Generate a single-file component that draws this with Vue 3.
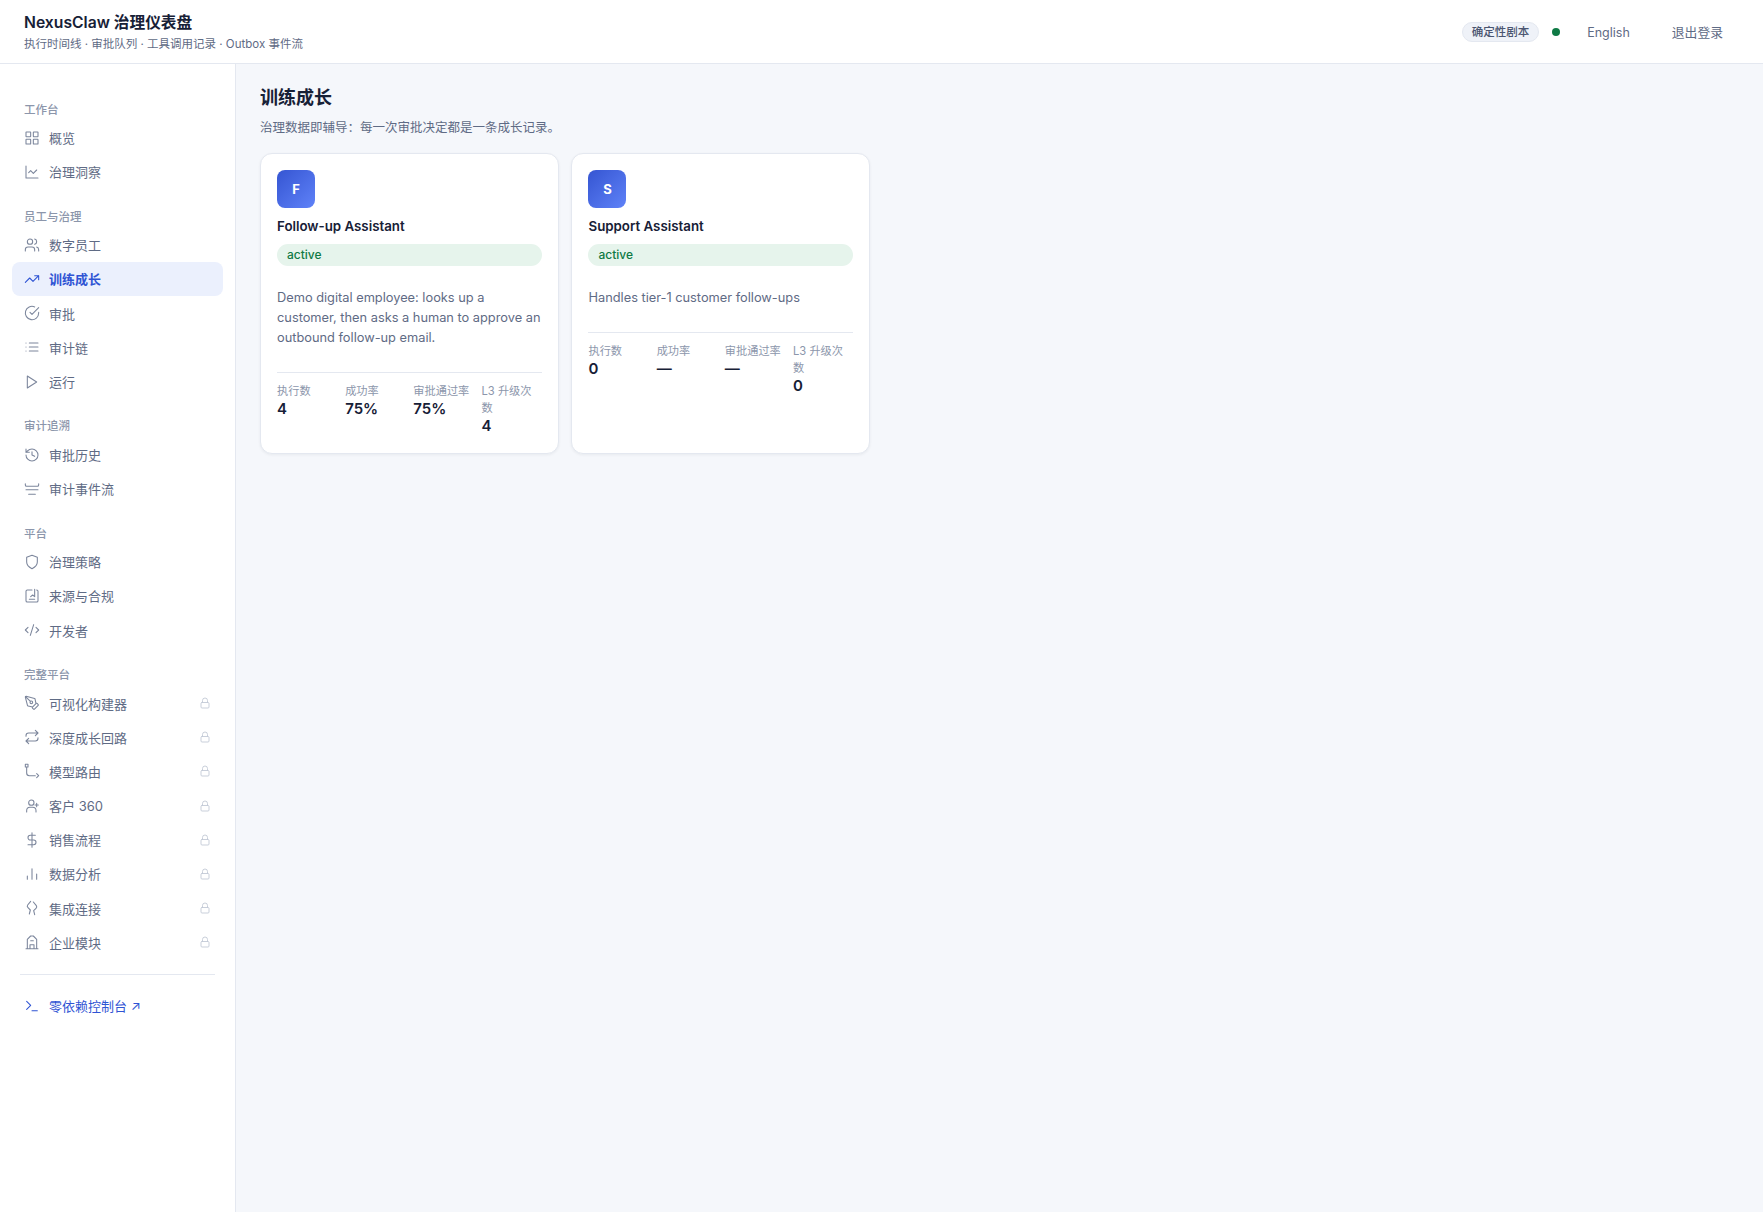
<template>
  <div class="page">
    <header class="topbar">
      <div class="brand">
        <div class="brand-title">NexusClaw 治理仪表盘</div>
        <div class="brand-sub">执行时间线 · 审批队列 · 工具调用记录 · Outbox 事件流</div>
      </div>
      <div class="top-actions">
        <span class="mode-pill">确定性剧本</span>
        <span class="status-dot"></span>
        <a class="top-link lang">English</a>
        <a class="top-link">退出登录</a>
      </div>
    </header>

    <div class="body">
      <aside class="sidebar">
        <section v-for="group in groups" :key="group.title" class="nav-group">
          <div class="nav-title">{{ group.title }}</div>
          <a
            v-for="item in group.items"
            :key="item.label"
            class="nav-item"
            :class="{ active: item.active }"
          >
            <svg class="nav-icon" viewBox="0 0 24 24" fill="none" stroke="currentColor" stroke-width="1.6" stroke-linecap="round" stroke-linejoin="round">
              <path :d="item.icon" />
            </svg>
            <span class="nav-label">{{ item.label }}</span>
            <svg v-if="group.locked" class="lock" viewBox="0 0 24 24" fill="none" stroke="currentColor" stroke-width="1.8" stroke-linecap="round" stroke-linejoin="round">
              <path d="M6 11h12a2 2 0 0 1 2 2v7a2 2 0 0 1-2 2H6a2 2 0 0 1-2-2v-7a2 2 0 0 1 2-2zM7 11V7a5 5 0 0 1 10 0v4" />
            </svg>
          </a>
        </section>
        <div class="side-divider"></div>
        <a class="nav-item console">
          <svg class="nav-icon" viewBox="0 0 24 24" fill="none" stroke="currentColor" stroke-width="1.6" stroke-linecap="round" stroke-linejoin="round">
            <path d="M4 17l6-6-6-6M12 19h8" />
          </svg>
          <span class="nav-label">零依赖控制台 ↗</span>
        </a>
      </aside>

      <main class="content">
        <h1>训练成长</h1>
        <p class="lead">治理数据即辅导&#xFF1A;每一次审批决定都是一条成长记录。</p>
        <div class="cards">
          <article v-for="emp in employees" :key="emp.name" class="card">
            <div class="avatar">{{ emp.name[0] }}</div>
            <div class="emp-name">{{ emp.name }}</div>
            <div class="badge">active</div>
            <p class="desc">{{ emp.desc }}</p>
            <div class="stats">
              <div v-for="stat in emp.stats" :key="stat.label" class="stat">
                <div class="stat-label">{{ stat.label }}</div>
                <div class="stat-value">{{ stat.value }}</div>
              </div>
            </div>
          </article>
        </div>
      </main>
    </div>
  </div>
</template>

<script setup>
const groups = [
  {
    title: '工作台',
    items: [
      { label: '概览', icon: 'M3.5 3h6a.5.5 0 0 1 .5.5v6a.5.5 0 0 1-.5.5h-6a.5.5 0 0 1-.5-.5v-6a.5.5 0 0 1 .5-.5zM14.5 3h6a.5.5 0 0 1 .5.5v6a.5.5 0 0 1-.5.5h-6a.5.5 0 0 1-.5-.5v-6a.5.5 0 0 1 .5-.5zM3.5 14h6a.5.5 0 0 1 .5.5v6a.5.5 0 0 1-.5.5h-6a.5.5 0 0 1-.5-.5v-6a.5.5 0 0 1 .5-.5zM14.5 14h6a.5.5 0 0 1 .5.5v6a.5.5 0 0 1-.5.5h-6a.5.5 0 0 1-.5-.5v-6a.5.5 0 0 1 .5-.5z' },
      { label: '治理洞察', icon: 'M3 3v18h18M19 9l-5 5-4-4-3 3' },
    ],
  },
  {
    title: '员工与治理',
    items: [
      { label: '数字员工', icon: 'M16 21v-2a4 4 0 0 0-4-4H6a4 4 0 0 0-4 4v2M13 7a4 4 0 1 1-8 0 4 4 0 0 1 8 0zM22 21v-2a4 4 0 0 0-3-3.87M16 3.13a4 4 0 0 1 0 7.75' },
      { label: '训练成长', active: true, icon: 'M22 7l-8.5 8.5-5-5L2 17M16 7h6v6' },
      { label: '审批', icon: 'M22 11.08V12a10 10 0 1 1-5.93-9.14M22 4L12 14.01l-3-3' },
      { label: '审计链', icon: 'M8 6h13M8 12h13M8 18h13M3 6h.01M3 12h.01M3 18h.01' },
      { label: '运行', icon: 'M5 3l14 9-14 9V3z' },
    ],
  },
  {
    title: '审计追溯',
    items: [
      { label: '审批历史', icon: 'M3 12a9 9 0 1 0 9-9 9.75 9.75 0 0 0-6.74 2.74L3 8M3 3v5h5M12 7v5l4 2' },
      { label: '审计事件流', icon: 'M2 4v2a2 2 0 0 0 2 2h16a2 2 0 0 0 2-2V4M3 13h18M7 20h10' },
    ],
  },
  {
    title: '平台',
    items: [
      { label: '治理策略', icon: 'M12 22s8-4 8-10V5l-8-3-8 3v7c0 6 8 10 8 10z' },
      { label: '来源与合规', icon: 'M12 3H5a2 2 0 0 0-2 2v14a2 2 0 0 0 2 2h14a2 2 0 0 0 2-2V5a2 2 0 0 0-2-2M16 2v11l-3-2.5L10 13M8 17h8' },
      { label: '开发者', icon: 'M18 16l4-4-4-4M6 8l-4 4 4 4M14.5 4l-5 16' },
    ],
  },
  {
    title: '完整平台',
    locked: true,
    items: [
      { label: '可视化构建器', icon: 'M15.7 21.3a1 1 0 0 1-1.4 0l-1.6-1.6a1 1 0 0 1 0-1.4l5.6-5.6a1 1 0 0 1 1.4 0l1.6 1.6a1 1 0 0 1 0 1.4zM18 13l-1.4-6.9a1 1 0 0 0-.7-.8L3.2 2a1 1 0 0 0-1.2 1.2l3.3 12.7a1 1 0 0 0 .8.7L13 18M2.3 2.3l7.3 7.3M13 11a2 2 0 1 1-4 0 2 2 0 0 1 4 0z' },
      { label: '深度成长回路', icon: 'M17 2l4 4-4 4M3 11v-1a4 4 0 0 1 4-4h14M7 22l-4-4 4-4M21 13v1a4 4 0 0 1-4 4H3' },
      { label: '模型路由', icon: 'M2 2h4v4H2zM4 6v9a4 4 0 0 0 4 4h9M19 16l3 3-3 3' },
      { label: '客户 360', icon: 'M4 21v-2a5 5 0 0 1 5-5h4a5 5 0 0 1 5 5v2M15 7a4 4 0 1 1-8 0 4 4 0 0 1 8 0zM19 8v5M16.5 10.5h5' },
      { label: '销售流程', icon: 'M12 1v22M17 5H9.5a3.5 3.5 0 0 0 0 7h5a3.5 3.5 0 0 1 0 7H6' },
      { label: '数据分析', icon: 'M12 20V4M19 20v-8M5 20v-5' },
      { label: '集成连接', icon: 'M10 2L5.5 7.5Q4 9.5 6 11.5L9.5 15 8 21M14 3l4.5 5.5q1.5 2-.5 4L14.5 16l1.5 6' },
      { label: '企业模块', icon: 'M3 22h18M5 22V8l5-5h4l5 5v14M9 22v-6h6v6M10 10h4' },
    ],
  },
]

const employees = [
  {
    name: 'Follow-up Assistant',
    desc: 'Demo digital employee: looks up a customer, then asks a human to approve an outbound follow-up email.',
    stats: [
      { label: '执行数', value: '4' },
      { label: '成功率', value: '75%' },
      { label: '审批通过率', value: '75%' },
      { label: 'L3 升级次数', value: '4' },
    ],
  },
  {
    name: 'Support Assistant',
    desc: 'Handles tier-1 customer follow-ups',
    stats: [
      { label: '执行数', value: '0' },
      { label: '成功率', value: '—' },
      { label: '审批通过率', value: '—' },
      { label: 'L3 升级次数', value: '0' },
    ],
  },
]
</script>

<style scoped>
.page {
  height: 1212px;
  display: flex;
  flex-direction: column;
  background: #f5f7fb;
  color: #172036;
  font-family: Inter, "Noto Sans CJK SC", sans-serif;
  overflow: hidden;
}

.topbar {
  height: 64px;
  box-sizing: border-box;
  flex-shrink: 0;
  display: flex;
  align-items: center;
  justify-content: space-between;
  padding: 0 24px;
  background: #fff;
  border-bottom: 1px solid #e4e8f0;
}

.brand {
  padding-top: 1px;
}

.brand-title {
  font-size: 15.7px;
  font-weight: 600;
  line-height: 22px;
  color: #172036;
}

.brand-sub {
  margin-top: 1px;
  font-size: 11.5px;
  line-height: 18px;
  color: #5f6b85;
}

.top-actions {
  display: flex;
  align-items: center;
}

.mode-pill {
  font-size: 11.5px;
  font-weight: 500;
  line-height: 18px;
  color: #4a5570;
  background: #eff2f8;
  border: 1px solid #e4e8f0;
  border-radius: 999px;
  padding: 0 9px;
}

.status-dot {
  width: 8px;
  height: 8px;
  margin: 0 11px 0 13px;
  border-radius: 50%;
  background: #0f7a45;
}

.top-link {
  font-size: 12.8px;
  color: #5f6b85;
  padding: 0 16px;
}

.top-link.lang {
  font-size: 12.5px;
  padding: 2px 14px 0 16px;
  margin-right: 12px;
}

.body {
  flex: 1;
  display: flex;
  min-height: 0;
}

.sidebar {
  width: 236px;
  box-sizing: border-box;
  flex-shrink: 0;
  background: #fff;
  border-right: 1px solid #e4e8f0;
  padding: 36.5px 12px 0;
}

.nav-group + .nav-group {
  margin-top: 18.8px;
}

.nav-title {
  font-size: 11.5px;
  font-weight: 500;
  line-height: 18px;
  color: #8c96ab;
  padding: 0 12px;
  margin-bottom: 2px;
}

.nav-item {
  height: 34.2px;
  display: flex;
  align-items: center;
  gap: 9px;
  padding: 0 12px;
  border-radius: 8px;
  font-size: 13px;
  color: #5f6b85;
}

.nav-item.active {
  background: #ebf0fd;
  color: #2f54d4;
  font-weight: 600;
}

.nav-icon {
  width: 16px;
  height: 16px;
  flex-shrink: 0;
  color: #7c869c;
}

.active .nav-icon,
.console .nav-icon {
  color: #2f54d4;
}

.nav-label {
  flex: 1;
}

.lock {
  width: 12px;
  height: 12px;
  color: #c3c9d6;
}

.side-divider {
  height: 1px;
  background: #e4e8f0;
  margin: 15px 8px 13px;
}

.console {
  color: #2f54d4;
}

.content {
  flex: 1;
  padding: 20px 24px;
}

h1 {
  margin: 0;
  font-size: 18px;
  font-weight: 600;
  line-height: 28px;
  color: #172036;
}

.lead {
  margin: 6px 0 15px;
  font-size: 12.5px;
  line-height: 20px;
  color: #5f6b85;
}

.cards {
  display: grid;
  grid-template-columns: repeat(auto-fill, 298.7px);
  gap: 12.8px;
}

.card {
  box-sizing: border-box;
  background: #fff;
  border: 1px solid #e4e8f0;
  border-radius: 12px;
  padding: 16px 16px 19px;
  box-shadow: 0 1px 3px rgba(23, 32, 54, 0.06);
}

.avatar {
  width: 38px;
  height: 38px;
  display: flex;
  align-items: center;
  justify-content: center;
  border-radius: 8px;
  background: linear-gradient(135deg, #3555d2, #5f82f8);
  color: #fff;
  font-size: 13px;
  font-weight: 700;
}

.emp-name {
  margin-top: 9px;
  font-size: 13.3px;
  font-weight: 600;
  line-height: 18px;
  color: #172036;
}

.badge {
  margin-top: 9px;
  padding: 0 10px;
  border-radius: 999px;
  background: #e6f4ec;
  color: #0f7a45;
  font-size: 12px;
  font-weight: 500;
  line-height: 22px;
}

.desc {
  margin: 22px 0 0;
  font-size: 12.8px;
  line-height: 20px;
  color: #5f6b85;
}

.stats {
  display: grid;
  grid-template-columns: repeat(4, 1fr);
  gap: 8px;
  margin-top: 24px;
  padding-top: 10px;
  border-top: 1px solid #e4e8f0;
}

.stat-label {
  font-size: 11.2px;
  line-height: 17px;
  color: #8c96ab;
}

.stat-value {
  font-size: 15px;
  font-weight: 600;
  line-height: 17px;
  color: #172036;
}
</style>
